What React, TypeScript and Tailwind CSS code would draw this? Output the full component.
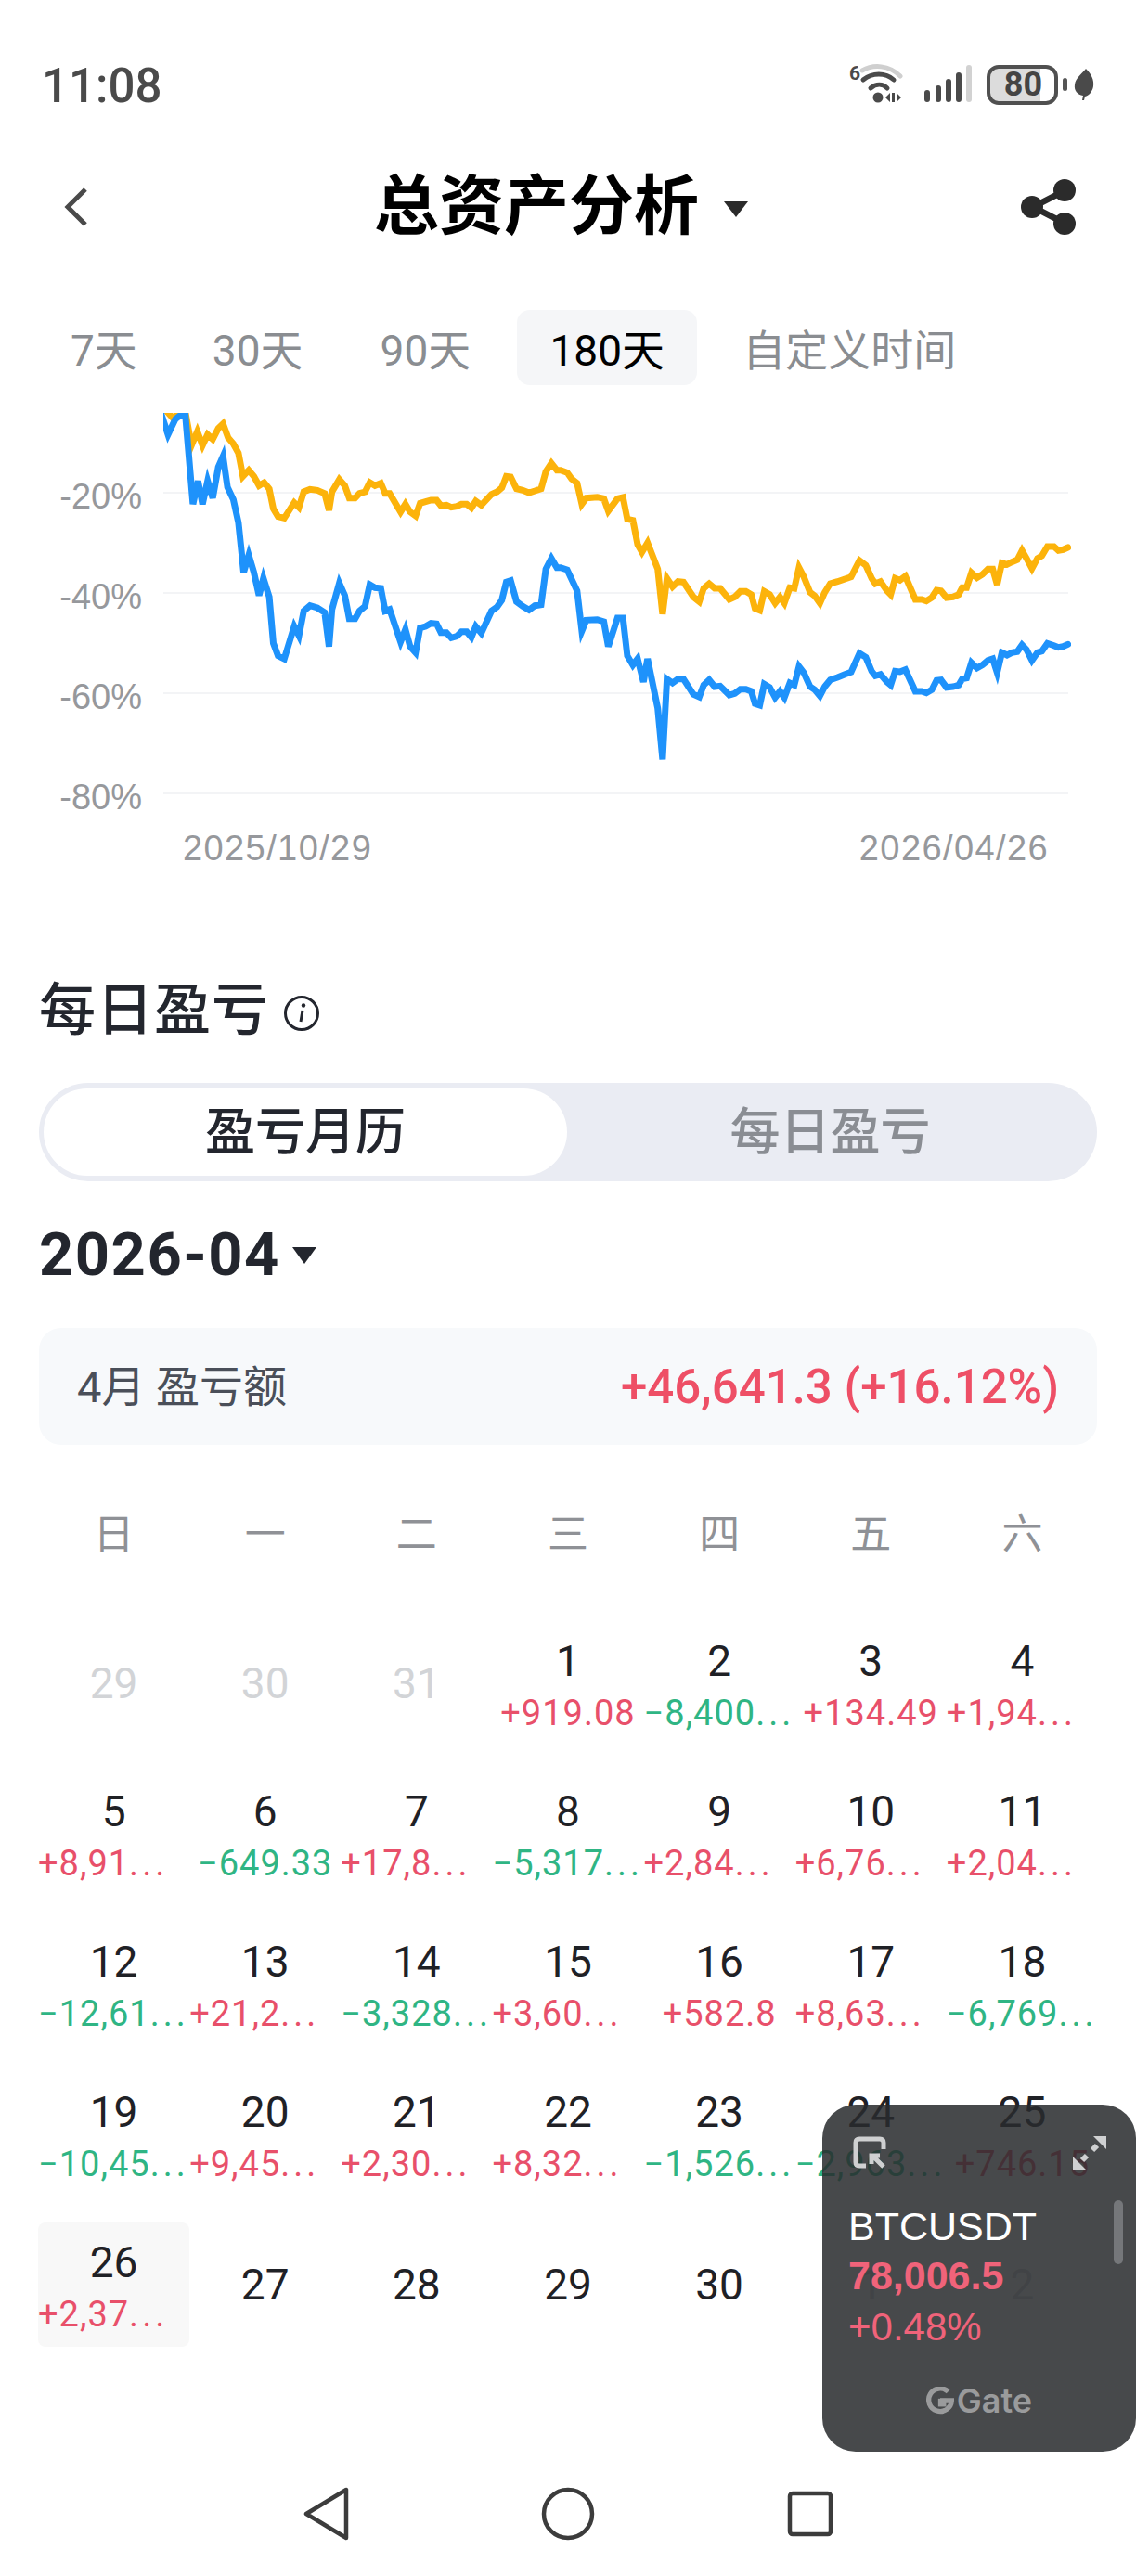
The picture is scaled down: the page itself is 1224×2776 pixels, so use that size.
const sans = "font-['Roboto','Noto_Sans_CJK_SC',sans-serif]";

// traced from the chart, in crop pixels: x / 2.53, y / 3
const blueA = [[440,50],[458,115],[478,65],[497,48],[505,48],[526,340],[540,265],[552,340],[566,265],[580,320],[595,220],[608,185],[620,285],[636,325],[650,400],[664,560],[678,505],[692,560],[706,635],[718,580],[734,640],[745,790],[758,830],[775,840],[802,735],[815,765],[828,685],[845,668],[865,675],[885,690],[897,800],[905,680],[925,595],[940,635],[952,710],[968,710],[980,685],[995,670],[1008,600],[1022,610],[1038,612],[1050,685],[1062,680],[1092,785],[1105,745],[1118,800],[1133,820],[1145,740],[1160,735],[1175,725],[1190,727],[1202,755],[1217,755],[1230,772],[1245,767],[1258,752],[1272,752],[1285,770],[1297,735],[1312,757],[1340,685],[1355,672],[1368,650],[1380,592],[1392,587],[1408,655],[1425,670],[1442,682],[1458,668],[1475,665],[1488,550],[1503,515],[1518,545]];
const blueB = [[0,545],[18,552],[45,620],[58,750],[70,715],[100,713],[118,720],[130,800],[155,708],[170,708],[182,830],[197,860],[210,840],[226,915],[237,840],[265,1000],[278,1165],[290,905],[305,918],[320,905],[335,905],[362,955],[378,963],[390,925],[405,908],[420,930],[435,928],[460,957],[475,952],[490,938],[505,938],[520,945],[530,985],[543,990],[555,922],[570,932],[585,965],[598,945],[610,965],[625,918],[637,925],[650,865],[663,885],[680,930],[693,940],[707,960],[720,930],[735,908],[755,900],[775,890],[792,883],[815,822],[832,835],[848,880],[858,895],[872,890],[890,915],[900,925],[912,880],[925,882],[940,875],[967,945],[985,945],[997,950],[1012,940],[1025,910],[1037,908],[1052,932],[1070,930],[1085,925],[1095,905],[1107,902],[1120,853],[1135,870],[1150,860],[1165,845],[1178,840],[1190,885],[1203,820],[1217,828],[1230,820],[1245,817],[1258,795],[1270,810],[1285,845],[1300,820],[1312,815],[1327,790],[1345,797],[1357,803],[1370,800],[1383,793]];
const orangeA = [[455,40],[470,60],[505,40],[522,150],[538,105],[552,150],[566,115],[580,130],[595,95],[608,80],[622,125],[636,145],[650,175],[662,250],[678,230],[692,250],[706,280],[720,270],[734,290],[745,355],[758,380],[775,385],[802,335],[815,350],[828,300],[845,292],[865,295],[885,305],[897,360],[905,300],[925,260],[940,280],[952,320],[968,320],[980,305],[995,300],[1008,270],[1022,280],[1038,272],[1050,305],[1062,305],[1092,365],[1105,340],[1118,365],[1133,378],[1145,337],[1160,332],[1175,327],[1190,327],[1202,345],[1217,343],[1230,350],[1245,347],[1258,340],[1272,340],[1285,352],[1297,330],[1312,343],[1340,308],[1355,300],[1368,287],[1380,250],[1392,252],[1408,290],[1425,295],[1442,303],[1458,297],[1475,290],[1488,235],[1503,208],[1518,230]];
const orangeB = [[0,230],[18,238],[30,258],[45,272],[58,340],[70,320],[100,317],[118,322],[130,362],[155,322],[170,318],[182,388],[197,392],[210,470],[222,495],[237,465],[265,550],[278,695],[290,580],[305,607],[320,590],[335,592],[362,640],[378,655],[390,612],[405,597],[420,612],[435,612],[460,648],[475,640],[490,622],[505,622],[520,632],[530,677],[543,683],[555,622],[570,632],[585,660],[598,640],[610,660],[625,610],[637,612],[650,545],[663,575],[680,625],[693,637],[707,660],[720,625],[735,597],[755,590],[775,582],[792,575],[815,522],[832,538],[848,580],[858,597],[872,590],[890,620],[900,632],[912,580],[925,586],[940,573],[967,648],[985,648],[997,653],[1012,642],[1025,618],[1037,620],[1052,642],[1070,640],[1085,632],[1095,610],[1107,610],[1120,562],[1135,578],[1150,567],[1165,550],[1178,550],[1190,600],[1203,530],[1217,535],[1230,527],[1245,520],[1258,490],[1270,515],[1285,548],[1300,515],[1312,507],[1327,477],[1345,477],[1357,490],[1370,487],[1383,480]];

// svg origin is page (176, 445)
function toPoints(a: number[][], b: number[][]) {
  const left = a.map(([x, y]) => `${(x / 2.53 - 176).toFixed(1)},${(y / 3 - 15).toFixed(1)}`);
  const right = b.map(([x, y]) => `${(604 + x / 2.53 - 176).toFixed(1)},${(y / 3 - 15).toFixed(1)}`);
  return [...left, ...right].join(" ");
}

function Chart() {
  return (
    <svg width="978" height="415" viewBox="0 0 978 415" className="block overflow-hidden">
      {[86, 194, 302, 410].map((y) => (
        <line key={y} x1="0" x2="975" y1={y} y2={y} stroke="#f3f4f6" strokeWidth="2" />
      ))}
      <polyline points={toPoints(orangeA, orangeB)} fill="none" stroke="#fcb30b" strokeWidth="7" strokeLinejoin="miter" strokeLinecap="round" />
      <polyline points={toPoints(blueA, blueB)} fill="none" stroke="#1e92fb" strokeWidth="7" strokeLinejoin="miter" strokeLinecap="round" />
    </svg>
  );
}

function StatusIcons() {
  return (
    <div className="flex items-center">
      <svg width="62" height="46" viewBox="0 0 62 46" fill="none" strokeLinecap="round">
        <text x="0" y="18" fontFamily="Roboto, sans-serif" fontWeight="700" fontSize="21" fill="#4a4a4a">6</text>
        <path d="M14 8 C26 1 43 2 55 14" stroke="#cfcfcf" strokeWidth="5" />
        <path d="M15 18 C25 10 39 10 48 18" stroke="#4a4a4a" strokeWidth="5" />
        <path d="M23 27 C29 22 36 22 41 27" stroke="#4a4a4a" strokeWidth="5" />
        <circle cx="31" cy="37" r="5.5" fill="#4a4a4a" />
        <path d="M39 37 L44 32 V42 Z M51 32 L56 37 L51 42 Z" fill="#4a4a4a" />
        <rect x="46" y="32" width="3" height="10" fill="#4a4a4a" />
      </svg>
      <svg width="52" height="42" viewBox="0 0 52 42" className="ml-[18px]" fill="none" strokeLinecap="round" strokeWidth="6">
        <path d="M4 30 V37 M16 25 V37 M27 18 V37 M38 11 V37" stroke="#4a4a4a" />
        <path d="M49 3 V37" stroke="#d2d2d2" />
      </svg>
      <div className="ml-[16px] flex h-[43px] w-[77px] items-center justify-center rounded-[13px] border-[4px] border-[#505050] bg-[linear-gradient(90deg,#dcdcdc_78%,#ffffff_78%)] pl-[2px] font-['Roboto',sans-serif] text-[36px] font-bold leading-none text-[#444444]">
        80
      </div>
      <div className="ml-[5px] h-[14px] w-[5px] rounded-full bg-[#555555]" />
      <svg width="22" height="34" viewBox="0 0 22 34" className="ml-[7px]">
        <path d="M13 0 C19 6 22 12 21 19 C20 25 16 29 12 30 L11 34 L9 34 L10 29 C4 28 0 24 1 17 C2 10 8 6 13 0 Z" fill="#4a4a4a" />
      </svg>
    </div>
  );
}

function ShareIcon() {
  return (
    <svg width="64" height="64" viewBox="0 0 64 64" fill="#2b2b2b" stroke="#2b2b2b">
      <path d="M49 14 L14 32 L49 50" fill="none" strokeWidth="6.5" />
      <circle cx="48" cy="14" r="12" stroke="none" />
      <circle cx="13" cy="32" r="12" stroke="none" />
      <circle cx="48" cy="50" r="12" stroke="none" />
    </svg>
  );
}

type Day = { d: number; v?: string; up?: boolean; muted?: boolean; today?: boolean };

const days: Day[] = [
  { d: 29, muted: true }, { d: 30, muted: true }, { d: 31, muted: true },
  { d: 1, v: "+919.08", up: true }, { d: 2, v: "−8,400..." }, { d: 3, v: "+134.49", up: true }, { d: 4, v: "+1,94...", up: true },
  { d: 5, v: "+8,91...", up: true }, { d: 6, v: "−649.33" }, { d: 7, v: "+17,8...", up: true }, { d: 8, v: "−5,317..." }, { d: 9, v: "+2,84...", up: true }, { d: 10, v: "+6,76...", up: true }, { d: 11, v: "+2,04...", up: true },
  { d: 12, v: "−12,61..." }, { d: 13, v: "+21,2...", up: true }, { d: 14, v: "−3,328..." }, { d: 15, v: "+3,60...", up: true }, { d: 16, v: "+582.8", up: true }, { d: 17, v: "+8,63...", up: true }, { d: 18, v: "−6,769..." },
  { d: 19, v: "−10,45..." }, { d: 20, v: "+9,45...", up: true }, { d: 21, v: "+2,30...", up: true }, { d: 22, v: "+8,32...", up: true }, { d: 23, v: "−1,526..." }, { d: 24, v: "−2,963..." }, { d: 25, v: "+746.15", up: true },
  { d: 26, v: "+2,37...", up: true, today: true }, { d: 27 }, { d: 28 }, { d: 29 }, { d: 30 }, { d: 1, muted: true }, { d: 2, muted: true },
];

function DayCell({ day }: { day: Day }) {
  const cut = day.v?.endsWith("...");
  return (
    <div className={`flex h-[134px] min-w-0 flex-col items-center rounded-[8px] ${day.v ? "justify-start pt-[16px]" : "justify-center"} ${day.today ? "bg-[#f8f8f8]" : ""}`}>
      <div className={`h-[54px] text-[46px] leading-[54px] ${day.muted ? "text-[#d2d4d7]" : "text-[#1f2126]"}`}>{day.d}</div>
      {day.v ? (
        <div className={`mt-[7px] h-[44px] w-full whitespace-nowrap text-[38px] leading-[44px] tracking-[1px] ${cut ? "text-left" : "text-center"} ${day.up ? "text-[#e8506a]" : "text-[#2fb584]"}`}>
          {cut ? (
            <>
              {day.v?.slice(0, -3)}
              <span className="tracking-[4px]">...</span>
            </>
          ) : day.v}
        </div>
      ) : null}
    </div>
  );
}

function FloatWindow() {
  return (
    <div className="absolute left-[886px] top-[2268px] h-[374px] w-[338px] rounded-[36px] bg-[#292b2d]/[0.86] font-['Liberation_Sans',sans-serif]">
      <div className="flex h-[103px] items-start justify-between pl-[33px] pr-[32px] pt-[34px]">
        <svg width="36" height="36" viewBox="0 0 36 36" fill="none" stroke="#cfd0d1" strokeWidth="5">
          <path d="M14 32 H7 Q3 32 3 28 V7 Q3 3 7 3 H29 Q33 3 33 7 V14" />
          <path d="M33 33 L21 21 M20 30 V21 H29" strokeWidth="5" />
        </svg>
        <svg width="36" height="36" viewBox="0 0 36 36" fill="#cfd0d1" stroke="#cfd0d1">
          <path d="M22 0 H36 V14 Z M0 22 V36 H14 Z" stroke="none" />
          <path d="M10 26 L15 21 M21 15 L26 10" strokeWidth="6" />
        </svg>
      </div>
      <div className="flex">
        <div className="pl-[28px]">
          <div className="text-[43px] leading-[56px] text-white">BTCUSDT</div>
          <div className="mt-[-3px] text-[43px] font-bold leading-[56px] text-[#f0637a]">78,006.5</div>
          <div className="text-[42px] leading-[56px] text-[#f0637a]">+0.48%</div>
        </div>
        <div className="ml-auto mr-[14px] h-[69px] w-[10px] rounded-full bg-[#75777a]" />
      </div>
      <div className="mt-[29px] flex items-center justify-center gap-[3px] font-['Inter',sans-serif]">
        <svg width="30" height="30" viewBox="0 0 28 28" fill="none">
          <path d="M22 5 A11.5 11.5 0 1 0 25.5 14 H14" stroke="#9a9b9c" strokeWidth="5" />
          <rect x="12" y="12" width="8" height="8" fill="#9a9b9c" />
        </svg>
        <span className="text-[36px] font-semibold leading-[44px] text-[#9a9b9c]">Gate</span>
      </div>
    </div>
  );
}

export default function App() {
  return (
    <div className={`relative h-[2776px] w-[1224px] overflow-hidden bg-white ${sans}`}>
      {/* status bar */}
      <div className="flex h-[148px] items-start justify-between pl-[45px] pr-[45px] pt-[61px]">
        <span className="text-[51px] font-medium leading-[64px] text-[#4a4a4a]">11:08</span>
        <div className="pt-[7px]"><StatusIcons /></div>
      </div>

      {/* title bar */}
      <div className="flex h-[150px] items-center pl-[69px] pr-[61px]">
        <svg width="25" height="42" viewBox="0 0 25 42" fill="none" stroke="#4a4a4a" strokeWidth="5">
          <path d="M23 2 L4 21 L23 40" />
        </svg>
        <span className="ml-[309px] text-[70px] font-bold leading-none text-black">总资产分析</span>
        <div className="ml-[27px] mt-[4px] h-0 w-0 border-x-[13px] border-t-[17px] border-x-transparent border-t-[#2b2b2b]" />
        <div className="ml-auto"><ShareIcon /></div>
      </div>

      {/* range tabs */}
      <div className="mt-[36px] flex h-[81px] items-center pl-[76px] text-[46px] leading-none text-[#8a8d91]">
        <div className="pt-[6px]">7天</div>
        <div className="ml-[81px] pt-[6px]">30天</div>
        <div className="ml-[83px] pt-[6px]">90天</div>
        <div className="ml-[50px] flex h-[81px] w-[194px] items-center justify-center rounded-[14px] bg-[#f5f6f8] pt-[6px] text-black">180天</div>
        <div className="ml-[49px] pt-[6px]">自定义时间</div>
      </div>

      {/* chart */}
      <div className="mt-[30px] flex font-['Liberation_Sans',sans-serif] text-[#96989c]">
        <div className="w-[176px] pt-[36px]">
          {["-20%", "-40%", "-60%", "-80%"].map((label) => (
            <div key={label} className="flex h-[108px] items-center justify-end pr-[23px] text-[38px]">{label}</div>
          ))}
        </div>
        <div>
          <Chart />
          <div className="mt-[24px] flex h-[60px] w-[954px] items-center justify-between pl-[21px] text-[38px] tracking-[1.4px]">
            <span>2025/10/29</span>
            <span>2026/04/26</span>
          </div>
        </div>
      </div>

      {/* daily pnl */}
      <div className="mt-[105px] flex h-[80px] items-center pl-[42px]">
        <span className="text-[61px] font-medium leading-none tracking-[1px] text-[#23262e]">每日盈亏</span>
        <svg width="40" height="40" viewBox="0 0 40 40" fill="none" className="ml-[15px] mt-[6px]">
          <circle cx="20" cy="20" r="17.5" stroke="#23262e" strokeWidth="3" />
          <path d="M21 17 L19 29" stroke="#23262e" strokeWidth="3" />
          <circle cx="22" cy="11.5" r="2.2" fill="#23262e" />
        </svg>
      </div>

      <div className="mx-[42px] mt-[38px] flex h-[106px] items-center rounded-full bg-[#eaecf3] pl-[5px]">
        <div className="flex h-[94px] w-[564px] items-center justify-center rounded-full bg-white text-[54px] font-medium text-[#23262e]">盈亏月历</div>
        <div className="flex flex-1 items-center justify-center pr-[4px] text-[54px] font-medium text-[#8a8d93]">每日盈亏</div>
      </div>

      <div className="mt-[39px] flex h-[80px] items-center pl-[42px]">
        <span className="text-[65px] font-bold leading-none tracking-[1.5px] text-[#23262e]">2026-04</span>
        <div className="ml-[13px] mt-[2px] h-0 w-0 border-x-[13px] border-t-[18px] border-x-transparent border-t-[#23262e]" />
      </div>

      <div className="mx-[42px] mt-[39px] flex h-[126px] items-center justify-between rounded-[24px] bg-[#f7f9fb] pl-[41px] pr-[41px]">
        <span className="text-[47px] leading-none text-[#4a4f59]">4月 盈亏额</span>
        <span className="text-[51px] font-medium leading-none text-[#ee4f66]">+46,641.3 (+16.12%)</span>
      </div>

      {/* calendar */}
      <div className="mt-[67px] grid h-[60px] grid-cols-7 items-center px-[41px] text-center text-[44px] leading-none text-[#8f9196]">
        {["日", "一", "二", "三", "四", "五", "六"].map((w) => <div key={w}>{w}</div>)}
      </div>
      <div className="mt-[63px] grid grid-cols-7 gap-y-[28px] px-[41px]">
        {days.map((day, i) => <DayCell key={i} day={day} />)}
      </div>

      {/* nav bar */}
      <div className="mt-[150px] flex h-[60px] items-center pl-[326px]">
        <svg width="52" height="58" viewBox="0 0 52 58" fill="none" stroke="#3c3c3c" strokeWidth="4.5" strokeLinejoin="round">
          <path d="M47 3 V55 L4 29 Z" />
        </svg>
        <svg width="58" height="58" viewBox="0 0 58 58" fill="none" stroke="#3c3c3c" strokeWidth="4.5" className="ml-[205px]">
          <circle cx="29" cy="29" r="26" />
        </svg>
        <svg width="50" height="50" viewBox="0 0 50 50" fill="none" stroke="#3c3c3c" strokeWidth="4.5" strokeLinejoin="round" className="ml-[207px]">
          <rect x="3" y="3" width="44" height="44" rx="3" />
        </svg>
      </div>

      <FloatWindow />
    </div>
  );
}
